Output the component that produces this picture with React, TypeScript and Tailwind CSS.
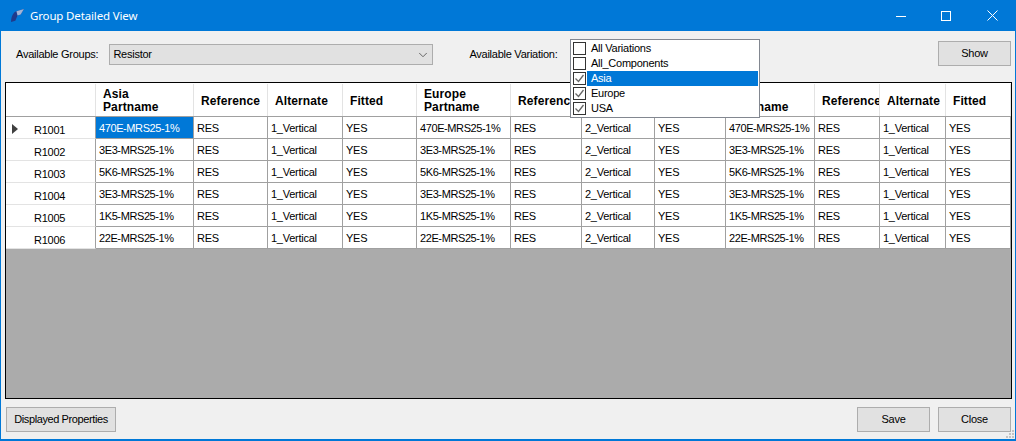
import { ChevronDown } from 'lucide-react';

const COLUMNS = 'grid-cols-[90px_98px_74px_75px_74px_94px_71px_73px_71px_89px_65px_66px_65px]';

const ROWS = [
  ['R1001', '470E-MRS25-1%'],
  ['R1002', '3E3-MRS25-1%'],
  ['R1003', '5K6-MRS25-1%'],
  ['R1004', '3E3-MRS25-1%'],
  ['R1005', '1K5-MRS25-1%'],
  ['R1006', '22E-MRS25-1%'],
];

const VARIATIONS = [
  { name: 'All Variations', checked: false },
  { name: 'All_Components', checked: false },
  { name: 'Asia', checked: true, selected: true },
  { name: 'Europe', checked: true },
  { name: 'USA', checked: true },
];

function HeaderCell({ lines }: { lines: string[] }) {
  return (
    <div
      className={`flex flex-col justify-center overflow-hidden whitespace-nowrap border-r border-[#e3e3e3] pl-[7px] text-[12px] leading-[13px] font-bold tracking-[0.1px] text-black ${
        lines.length === 1 ? 'pt-[3px]' : 'pt-[1px]'
      }`}
    >
      {lines.map((l) => (
        <span key={l}>{l}</span>
      ))}
    </div>
  );
}

function Cell({ text, selected, tight }: { text: string; selected?: boolean; tight?: boolean }) {
  return (
    <div
      className={`overflow-hidden whitespace-nowrap border-r border-b border-[#a0a0a0] pl-[3px] pt-[3px] text-[11px] leading-[16px] ${
        selected ? 'bg-[#0078d7] text-white' : 'bg-white text-black'
      } ${tight ? 'tracking-[-0.4px]' : ''}`}
    >
      {text}
    </div>
  );
}

function Btn({ label, className }: { label: string; className: string }) {
  return (
    <button className={`h-[25px] whitespace-nowrap border border-[#adadad] bg-[#e1e1e1] text-[11px] text-black ${className}`}>
      {label}
    </button>
  );
}

export default function App() {
  return (
    <div className="relative flex h-[441px] w-[1016px] flex-col overflow-hidden border-x border-b-2 border-[#0078d7] bg-[#f0f0f0] font-['Liberation_Sans',sans-serif] tracking-[-0.25px]">
      {/* Title bar */}
      <div className="flex h-[31px] shrink-0 items-center bg-[#0078d7] text-white">
        <svg viewBox="0 0 14 14" className="ml-[9px] h-[15px] w-[15px]">
          <path d="M1 13 C1 8 3 4 6 3 L13 1 L10 6 L7 7 L5 12 Z" fill="#1f3a8c" />
          <path d="M6 3 L13 1 L10 6 L7 7 Z" fill="#a3b4d6" />
        </svg>
        <span className="ml-[5px] font-['Noto_Sans',sans-serif] text-[11.5px] tracking-[-0.15px]">Group Detailed View</span>
        <div className="ml-auto flex items-center">
          <svg viewBox="0 0 10 10" className="h-[10px] w-[10px]">
            <path d="M0 5.5 H10" stroke="white" strokeWidth="1" fill="none" />
          </svg>
          <svg viewBox="0 0 10 10" className="ml-[35px] h-[10px] w-[10px]">
            <rect x="0.5" y="0.5" width="9" height="9" stroke="white" strokeWidth="1" fill="none" />
          </svg>
          <svg viewBox="0 0 11 11" className="ml-[36px] mr-[17px] h-[11px] w-[11px]">
            <path d="M0.5 0.5 L10.5 10.5 M10.5 0.5 L0.5 10.5" stroke="white" strokeWidth="1" fill="none" />
          </svg>
        </div>
      </div>

      {/* Filters */}
      <div className="flex h-[51px] shrink-0 items-start text-[11px] text-black">
        <span className="ml-[15px] mt-[15px] leading-[16px]">Available Groups:</span>
        <div className="ml-[11px] mt-[13px] flex h-[21px] w-[324px] items-center justify-between border border-[#adadad] bg-[#e1e1e1] pl-[3px] pr-[2px]">
          <span>Resistor</span>
          <ChevronDown className="h-[14px] w-[14px] text-[#555]" strokeWidth={1.5} />
        </div>
        <span className="ml-[36px] mt-[15px] leading-[16px]">Available Variation:</span>
        <Btn label="Show" className="ml-auto mr-[4px] mt-[10px] w-[73px]" />
      </div>

      {/* Variation list, open over the grid */}
      <div className="absolute left-[569px] top-[39px] z-10 flex h-[79px] w-[190px] flex-col border border-[#828790] bg-white py-[1px] pl-[2px] pr-[1px] text-[11px] text-black">
        {VARIATIONS.map((v) => (
          <div key={v.name} className="flex h-[15px] items-center">
            <span className="flex h-[13px] w-[13px] shrink-0 items-center justify-center border border-[#333] bg-white">
              {v.checked && (
                <svg viewBox="0 0 11 11" className="h-[11px] w-[11px]">
                  <path d="M1.5 5.5 L4.5 8.5 L9.5 2" stroke="#666" strokeWidth="1.3" fill="none" />
                </svg>
              )}
            </span>
            <span
              className={`ml-[1px] h-[15px] flex-1 pl-[4px] leading-[15px] ${
                v.selected ? 'bg-[#0078d7] text-white' : ''
              }`}
            >
              {v.name}
            </span>
          </div>
        ))}
      </div>

      {/* Grid */}
      <div className="ml-[4px] mr-[3px] flex h-[317px] shrink-0 flex-col border border-black bg-[#ababab]">
        <div className={`grid h-[34px] shrink-0 border-t border-b border-b-[#a0a0a0] border-t-white bg-white ${COLUMNS}`}>
          <div className="border-r border-[#e3e3e3]" />
          <HeaderCell lines={['Asia', 'Partname']} />
          <HeaderCell lines={['Reference']} />
          <HeaderCell lines={['Alternate']} />
          <HeaderCell lines={['Fitted']} />
          <HeaderCell lines={['Europe', 'Partname']} />
          <HeaderCell lines={['Reference']} />
          <HeaderCell lines={['Alternate']} />
          <HeaderCell lines={['Fitted']} />
          <HeaderCell lines={['USA', 'Partname']} />
          <HeaderCell lines={['Reference']} />
          <HeaderCell lines={['Alternate']} />
          <HeaderCell lines={['Fitted']} />
        </div>
        {ROWS.map(([ref, part], i) => (
          <div key={ref} className={`grid h-[22px] shrink-0 ${COLUMNS}`}>
            <div className="flex items-end border-r border-b border-r-[#a0a0a0] border-b-[#e3e3e3] bg-white text-[11px] leading-[16px] text-black">
              <span className="mb-[4px] ml-[6px] w-[10px]">
                {i === 0 && (
                  <svg viewBox="0 0 6 10" className="h-[10px] w-[6px]">
                    <path d="M0 0 L6 5 L0 10 Z" fill="#404040" />
                  </svg>
                )}
              </span>
              <span className="ml-[12px]">{ref}</span>
            </div>
            <Cell text={part} selected={i === 0} tight />
            <Cell text="RES" />
            <Cell text="1_Vertical" />
            <Cell text="YES" />
            <Cell text={part} tight />
            <Cell text="RES" />
            <Cell text="2_Vertical" />
            <Cell text="YES" />
            <Cell text={part} tight />
            <Cell text="RES" />
            <Cell text="1_Vertical" />
            <Cell text="YES" />
          </div>
        ))}
      </div>

      {/* Footer */}
      <div className="flex flex-1 items-start pt-[8px]">
        <Btn label="Displayed Properties" className="ml-[5px] w-[110px] tracking-[-0.4px]" />
        <Btn label="Save" className="ml-auto w-[73px]" />
        <Btn label="Close" className="ml-[8px] mr-[4px] w-[73px]" />
      </div>

      {/* Resize grip */}
      <svg viewBox="0 0 10 10" className="absolute bottom-0 right-0 h-[10px] w-[10px]">
        {[[7, 1], [4, 4], [7, 4], [1, 7], [4, 7], [7, 7]].map(([x, y]) => (
          <rect key={`${x}-${y}`} x={x} y={y} width="2" height="2" fill="#c4c4c4" />
        ))}
      </svg>
    </div>
  );
}
